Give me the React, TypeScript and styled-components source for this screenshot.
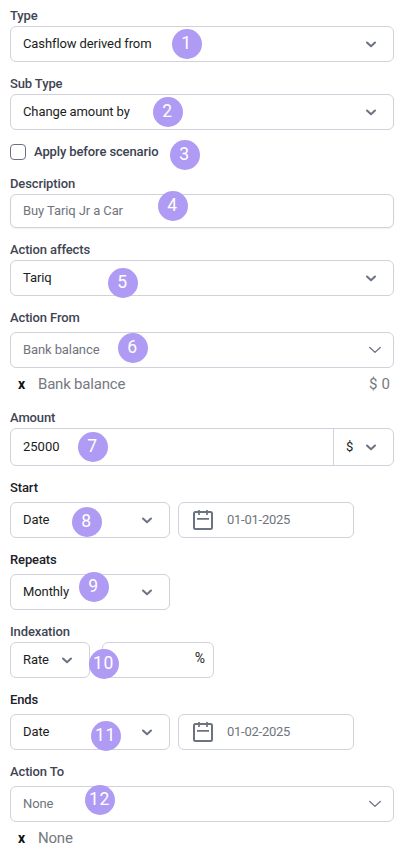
import React from "react";
import styled, { createGlobalStyle } from "styled-components";

const GlobalStyle = createGlobalStyle`
  *, *::before, *::after { box-sizing: border-box; }
  body { margin: 0; background: #fff; font-family: Roboto, "Liberation Sans", sans-serif; }
`;

const Form = styled.form`
  width: 405px;
  height: 849px;
  padding: 6px 11px 0 10px;
  overflow: hidden;
  font-size: 13px;
  line-height: 20px;
  color: #1f2430;
  letter-spacing: -0.1px;
`;

const Field = styled.div<{ $mb?: number; $gap?: number }>`
  position: relative;
  display: flex;
  flex-direction: column;
  gap: ${(p) => p.$gap ?? 0}px;
  margin-bottom: ${(p) => p.$mb ?? 12}px;
`;

const Label = styled.label<{ $dark?: boolean }>`
  height: 20px;
  font-weight: 500;
  letter-spacing: -0.12px;
  color: ${(p) => (p.$dark ? "#1c2029" : "#3f4553")};
`;

const AmountLabel = styled(Label)`
  height: 28px;
  padding-top: 8px;
`;

const Row = styled.div<{ $gap: number }>`
  display: flex;
  gap: ${(p) => p.$gap}px;
`;

const Box = styled.div<{ $w?: number; $h?: number; $muted?: boolean; $pr?: number; $shadow?: boolean }>`
  display: flex;
  align-items: center;
  justify-content: space-between;
  width: ${(p) => (p.$w ? `${p.$w}px` : "100%")};
  height: ${(p) => p.$h ?? 36}px;
  padding: 0 ${(p) => p.$pr ?? 14}px 0 12px;
  border: 1px solid #d1d1db;
  border-radius: 6px;
  background: #fff;
  color: ${(p) => (p.$muted ? "#70747c" : "#1b1d22")};
  box-shadow: ${(p) => (p.$shadow ? "0 1px 2px rgba(0, 0, 0, 0.06)" : "none")};
`;

const AmountBox = styled(Box)`
  padding-right: 0;
  letter-spacing: 0;
`;

const Currency = styled.div`
  display: flex;
  align-items: center;
  justify-content: space-between;
  width: 60px;
  height: 100%;
  padding: 0 14px 0 12px;
  border-left: 1px solid #d1d1db;
`;

const DateBox = styled(Box)`
  justify-content: flex-start;
  gap: 12px;
  letter-spacing: -0.25px;
`;

const Percent = styled(Box)`
  justify-content: flex-end;
  padding-right: 8px;
  font-size: 14px;
`;

const PercentSign = styled.span`
  position: relative;
  top: -2px;
`;

const CheckRow = styled.div`
  position: relative;
  display: flex;
  align-items: center;
  gap: 8px;
  height: 20px;
  margin-bottom: 12px;
  font-weight: 500;
  letter-spacing: -0.12px;
  color: #3c4250;
`;

const Checkbox = styled.span`
  width: 16px;
  height: 16px;
  border: 1px solid #6b7080;
  border-radius: 4px;
`;

const Entry = styled.div`
  display: flex;
  align-items: center;
  height: 32px;
  padding: 0 4px 0 8px;
  font-size: 15px;
  letter-spacing: -0.2px;
  color: #757980;
`;

const Remove = styled.span`
  width: 20px;
  font-size: 14px;
  font-weight: 700;
  color: #111;
`;

const Value = styled.span`
  margin-left: auto;
  letter-spacing: 0.1px;
`;

const Badge = styled.span<{ $x: number; $y: number }>`
  position: absolute;
  left: ${(p) => p.$x}px;
  top: ${(p) => p.$y}px;
  width: 30px;
  height: 30px;
  border-radius: 50%;
  background: #af9bf3;
  color: #fff;
  font-size: 17.5px;
  font-weight: 400;
  line-height: 29px;
  letter-spacing: 0.6px;
  text-align: center;
`;

const Icon = styled.svg`
  display: block;
  flex: none;
  fill: none;
  stroke: #6b7280;
`;

const Chevron = () => (
  <Icon width="16" height="16" viewBox="0 0 16 16" strokeWidth="2" strokeLinecap="round" strokeLinejoin="round">
    <path d="M4 6.5 8 10.2 12 6.5" />
  </Icon>
);

const ThinChevron = () => (
  <Icon width="14" height="16" viewBox="0 0 14 16" strokeWidth="1.3" strokeLinecap="round" strokeLinejoin="round">
    <path d="M1.8 5.5 7 10.4 12.2 5.5" />
  </Icon>
);

const Calendar = () => (
  <Icon width="24" height="24" viewBox="0 0 24 24" strokeWidth="2" strokeLinejoin="round">
    <rect x="3" y="4" width="18" height="17" rx="1.5" />
    <path d="M8 2v5M16 2v5M6 10.8h12" strokeWidth="1.7" />
  </Icon>
);

export default function App() {
  return (
    <>
      <GlobalStyle />
      <Form>
        <Field>
          <Label>Type</Label>
          <Box>Cashflow derived from<Chevron /></Box>
          <Badge $x={161.5} $y={22.5}>1</Badge>
        </Field>
        <Field>
          <Label>Sub Type</Label>
          <Box>Change amount by<Chevron /></Box>
          <Badge $x={142.5} $y={22.5}>2</Badge>
        </Field>
        <CheckRow>
          <Checkbox />Apply before scenario
          <Badge $x={159.5} $y={-2.5}>3</Badge>
        </CheckRow>
        <Field>
          <Label>Description</Label>
          <Box $h={34} $muted $shadow>Buy Tariq Jr a Car</Box>
          <Badge $x={147.5} $y={16.5}>4</Badge>
        </Field>
        <Field>
          <Label>Action affects</Label>
          <Box>Tariq<Chevron /></Box>
          <Badge $x={97.5} $y={27.5}>5</Badge>
        </Field>
        <Field $gap={4} $mb={0}>
          <Label>Action From</Label>
          <Box $muted $pr={11}>Bank balance<ThinChevron /></Box>
          <Badge $x={107.5} $y={24.5}>6</Badge>
        </Field>
        <Entry><Remove>x</Remove>Bank balance<Value>$ 0</Value></Entry>
        <Field>
          <AmountLabel>Amount</AmountLabel>
          <AmountBox $h={38}>25000<Currency>$<Chevron /></Currency></AmountBox>
          <Badge $x={67.5} $y={31.5}>7</Badge>
        </Field>
        <Field $gap={4}>
          <Label $dark>Start</Label>
          <Row $gap={8}>
            <Box $w={160}>Date<Chevron /></Box>
            <DateBox $w={176} $muted><Calendar />01-01-2025</DateBox>
          </Row>
          <Badge $x={61.5} $y={28.5}>8</Badge>
        </Field>
        <Field $gap={4}>
          <Label $dark>Repeats</Label>
          <Box $w={160}>Monthly<Chevron /></Box>
          <Badge $x={68.5} $y={21.5}>9</Badge>
        </Field>
        <Field>
          <Label>Indexation</Label>
          <Row $gap={12}>
            <Box $w={80}>Rate<Chevron /></Box>
            <Percent $w={112}><PercentSign>%</PercentSign></Percent>
          </Row>
          <Badge $x={78.5} $y={26.5}>10</Badge>
        </Field>
        <Field $gap={4}>
          <Label $dark>Ends</Label>
          <Row $gap={8}>
            <Box $w={160}>Date<Chevron /></Box>
            <DateBox $w={176} $muted><Calendar />01-02-2025</DateBox>
          </Row>
          <Badge $x={80.5} $y={30.5}>11</Badge>
        </Field>
        <Field $gap={4} $mb={0}>
          <Label>Action To</Label>
          <Box $muted $pr={11}>None<ThinChevron /></Box>
          <Badge $x={74.5} $y={22.5}>12</Badge>
        </Field>
        <Entry><Remove>x</Remove>None</Entry>
      </Form>
    </>
  );
}
